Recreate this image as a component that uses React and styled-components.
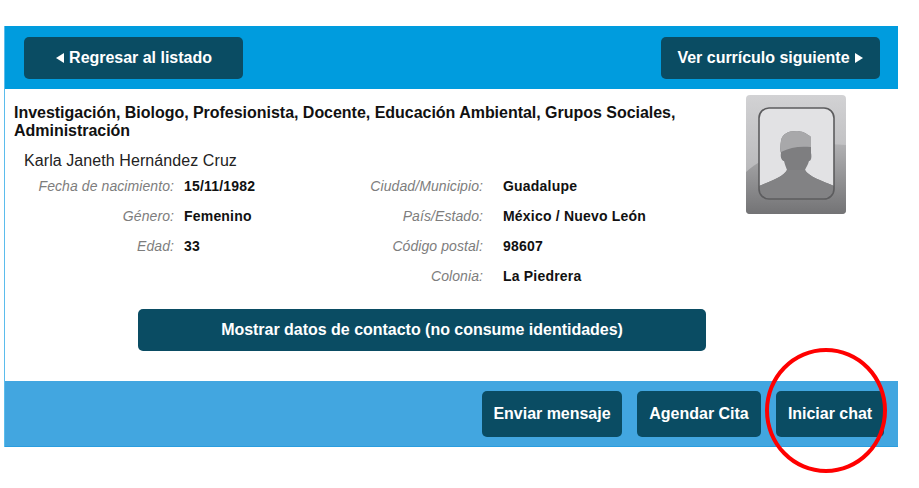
import React from 'react';
import styled, { createGlobalStyle } from 'styled-components';

const GlobalStyle = createGlobalStyle`
  html, body {
    margin: 0;
    padding: 0;
    background: #fff;
    font-family: "Liberation Sans", Arial, sans-serif;
  }
`;

const Page = styled.div`
  position: relative;
  width: 919px;
  height: 488px;
  padding: 26px 21px 0 4px;
  box-sizing: border-box;
  overflow: hidden;
`;

const Card = styled.div`
  display: flex;
  flex-direction: column;
  height: 421px;
  border-left: 1px solid #5bbcec;
  box-sizing: border-box;
`;

const Header = styled.div`
  display: flex;
  justify-content: space-between;
  align-items: center;
  height: 63px;
  padding: 0 18px 0 19px;
  background: #009cde;
  flex-shrink: 0;
  box-sizing: border-box;
`;

const Button = styled.button`
  display: flex;
  align-items: center;
  justify-content: center;
  gap: 5px;
  width: ${(p) => p.$width}px;
  height: ${(p) => p.$height || 42}px;
  padding: 0;
  border: none;
  border-radius: 5px;
  background: #0a4c63;
  color: #fff;
  font-family: inherit;
  font-size: 16px;
  font-weight: 700;
  letter-spacing: -0.02px;
`;

const Arrow = styled.svg`
  width: 9px;
  height: 10px;
  fill: #fff;
`;

const Body = styled.div`
  flex: 1;
  display: flex;
  align-items: flex-start;
  justify-content: space-between;
  padding: 6px 52px 0 9px;
`;

const Main = styled.div`
  width: 692px;
`;

const Title = styled.h1`
  width: 680px;
  margin: 9px 0 0;
  font-size: 16px;
  line-height: 18px;
  font-weight: 700;
  color: #111;
  letter-spacing: -0.025px;
`;

const Name = styled.div`
  margin: 12px 0 0 10px;
  font-size: 16px;
  line-height: 18px;
  letter-spacing: 0.08px;
  color: #222;
`;

const Details = styled.div`
  display: flex;
  margin-top: 1px;
`;

const DetailColumn = styled.dl`
  display: grid;
  grid-template-columns: ${(p) => p.$labelWidth}px auto;
  column-gap: ${(p) => p.$gap}px;
  grid-auto-rows: 30px;
  align-items: center;
  width: ${(p) => p.$width}px;
  margin: 0;
`;

const Label = styled.dt`
  font-size: 14px;
  font-style: italic;
  color: #7d7d7d;
  letter-spacing: 0.08px;
  text-align: right;
`;

const Value = styled.dd`
  margin: 0;
  font-size: 14px;
  font-weight: 700;
  color: #111;
  letter-spacing: 0.2px;
  white-space: nowrap;
`;

const ContactRow = styled.div`
  display: flex;
  margin: 18px 0 0 124px;
`;

const PhotoFrame = styled.svg`
  display: block;
  width: 100px;
  height: 119px;
  flex-shrink: 0;
`;

const Footer = styled.div`
  display: flex;
  justify-content: flex-end;
  align-items: flex-start;
  gap: 15px;
  height: 66px;
  padding: 10px 14px 0 0;
  background: #42a6e0;
  border-bottom: 1px solid #2a9ddf;
  flex-shrink: 0;
  box-sizing: border-box;
`;

const Ring = styled.div`
  position: absolute;
  left: 765px;
  top: 348px;
  width: 122px;
  height: 125px;
  border: 4px solid #ff0000;
  border-radius: 50%;
  box-sizing: border-box;
  pointer-events: none;
`;

const col1 = [
  ['Fecha de nacimiento:', '15/11/1982'],
  ['Género:', 'Femenino'],
  ['Edad:', '33'],
];

const col2 = [
  ['Ciudad/Municipio:', 'Guadalupe'],
  ['País/Estado:', 'México / Nuevo León'],
  ['Código postal:', '98607'],
  ['Colonia:', 'La Piedrera'],
];

const PhotoIcon = () => (
  <PhotoFrame viewBox="0 0 100 119">
    <defs>
      <linearGradient id="frame" x1="0" y1="0" x2="0" y2="1">
        <stop offset="0" stopColor="#d2d2d4" />
        <stop offset="0.6" stopColor="#bbbbbd" />
        <stop offset="1" stopColor="#9a9a9c" />
      </linearGradient>
      <linearGradient id="lower" gradientUnits="userSpaceOnUse" x1="0" y1="50" x2="0" y2="119">
        <stop offset="0" stopColor="#b0b0b2" />
        <stop offset="1" stopColor="#737375" />
      </linearGradient>
      <clipPath id="inner">
        <rect x="13" y="13" width="75" height="91" rx="10" />
      </clipPath>
    </defs>
    <rect width="100" height="119" rx="4" fill="url(#frame)" />
    <path d="M0 77C18 60 55 46 100 50V115a4 4 0 0 1-4 4H4a4 4 0 0 1-4-4Z" fill="url(#lower)" />
    <rect x="13" y="13" width="75" height="91" rx="10" fill="#e2e2e4" />
    <g clipPath="url(#inner)">
      <path
        d="M35 46C34 52 34 56 35 58C34 62 36 66 38 66C39 70 40 72 41 75C38 81 26 86 13 91V105H88V91C76 86 62 81 59 75C60 72 62 70 63 66C65 66 66 62 65 58V42C60 38 56 36 50 36C42 36 36 39 35 46Z"
        fill="#7e7e80"
      />
      <path d="M35 57C34 54 34 50 35 46C36 39 42 36 50 36C56 36 60 38 65 42V52C54 51 44 52 35 57Z" fill="#a8a8aa" />
      <path d="M13 91C26 86 38 81 41 75H59C62 81 76 86 88 91V105H13Z" fill="#828284" />
    </g>
    <rect x="13" y="13" width="75" height="91" rx="10" fill="none" stroke="#5c5c5e" strokeWidth="1.6" />
  </PhotoFrame>
);

const App = () => {
  return (
    <>
      <GlobalStyle />
      <Page>
        <Card>
          <Header>
            <Button $width={219}>
              <Arrow viewBox="0 0 9 10">
                <path d="M9 0V10L1 5Z" />
              </Arrow>
              Regresar al listado
            </Button>
            <Button $width={219}>
              Ver currículo siguiente
              <Arrow viewBox="0 0 9 10">
                <path d="M0 0V10L8 5Z" />
              </Arrow>
            </Button>
          </Header>
          <Body>
            <Main>
              <Title>
                Investigación, Biologo, Profesionista, Docente, Educación Ambiental, Grupos Sociales, Administración
              </Title>
              <Name>Karla Janeth Hernández Cruz</Name>
              <Details>
                <DetailColumn $labelWidth={160} $gap={10} $width={309}>
                  {col1.map(([label, value]) => (
                    <React.Fragment key={label}>
                      <Label>{label}</Label>
                      <Value>{value}</Value>
                    </React.Fragment>
                  ))}
                </DetailColumn>
                <DetailColumn $labelWidth={160} $gap={20} $width={340}>
                  {col2.map(([label, value]) => (
                    <React.Fragment key={label}>
                      <Label>{label}</Label>
                      <Value>{value}</Value>
                    </React.Fragment>
                  ))}
                </DetailColumn>
              </Details>
              <ContactRow>
                <Button $width={568}>Mostrar datos de contacto (no consume identidades)</Button>
              </ContactRow>
            </Main>
            <PhotoIcon />
          </Body>
          <Footer>
            <Button $width={140} $height={46}>Enviar mensaje</Button>
            <Button $width={124} $height={46}>Agendar Cita</Button>
            <Button $width={108} $height={46}>Iniciar chat</Button>
          </Footer>
        </Card>
        <Ring />
      </Page>
    </>
  );
};

export default App;
